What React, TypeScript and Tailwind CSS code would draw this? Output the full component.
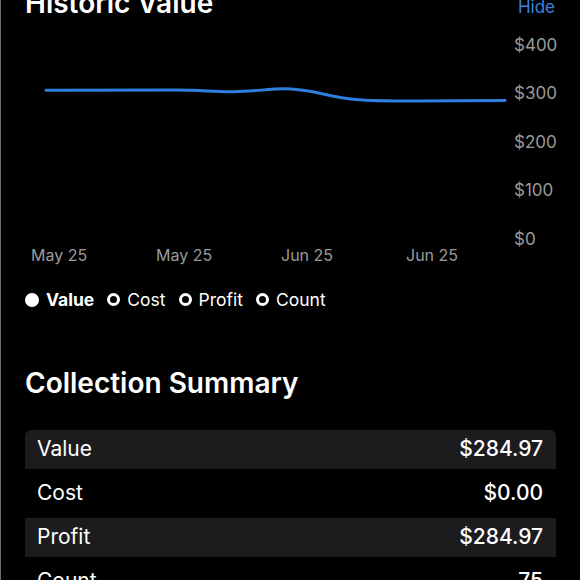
const yLabels = ["$400", "$300", "$200", "$100", "$0"];
const xLabels = ["May 25", "May 25", "Jun 25", "Jun 25"];

const legend = [
  { label: "Value", active: true },
  { label: "Cost", active: false },
  { label: "Profit", active: false },
  { label: "Count", active: false },
];

const rows = [
  { label: "Value", value: "$284.97", shaded: true },
  { label: "Cost", value: "$0.00", shaded: false },
  { label: "Profit", value: "$284.97", shaded: true },
  { label: "Count", value: "75", shaded: false },
];

function Chart() {
  return (
    <div className="flex h-[210px]">
      <svg width="489" height="210" viewBox="0 0 489 210" className="shrink-0">
        <path
          d="M21 53.3 L150 53 C175 53, 190 55, 208 54.8 C230 54.5, 245 51.5, 262 51.8 C285 52, 305 60, 330 62.5 C345 63.8, 360 64, 390 64 L480 63.5"
          fill="none"
          stroke="#2f7fe0"
          strokeWidth="3"
          strokeLinecap="round"
          strokeLinejoin="round"
        />
      </svg>
      <div className="flex flex-col justify-between text-[17px] leading-[16px] text-[#9a9a9a]">
        {yLabels.map((l) => (
          <span key={l}>{l}</span>
        ))}
      </div>
    </div>
  );
}

export default function App() {
  return (
    <div
      className="w-[580px] h-[580px] overflow-hidden bg-black border-l border-[#6b6b6b] text-white"
      style={{ fontFamily: "Inter, 'Liberation Sans', sans-serif" }}
    >
      <div className="px-[24px]">
        <div className="flex items-baseline justify-between -mt-[14px]">
          <h2 className="text-[28px] leading-[34px] font-semibold">Historic Value</h2>
          <button className="text-[17px] text-[#3a82e0] mr-[1px]">Hide</button>
        </div>

        <div className="mt-[16px]">
          <Chart />
        </div>

        <div className="ml-[6px] grid grid-cols-4 w-[500px] text-[16px] leading-[16px] text-[#9a9a9a]">
          {xLabels.map((l, i) => (
            <span key={i}>{l}</span>
          ))}
        </div>

        <div className="mt-[27px] flex items-center gap-[13px] text-[17.5px] leading-[20px]">
          {legend.map((item) => (
            <div key={item.label} className="flex items-center gap-[7px]">
              <span
                className={
                  item.active
                    ? "w-[14px] h-[14px] rounded-full bg-white"
                    : "w-[13px] h-[13px] rounded-full border-[3px] border-white"
                }
              />
              <span className={item.active ? "font-bold" : ""}>{item.label}</span>
            </div>
          ))}
        </div>

        <h2 className="mt-[56px] text-[28px] leading-[34px] font-semibold">Collection Summary</h2>

        <div className="mt-[30px] flex flex-col gap-[5px]">
          {rows.map((r, i) => (
            <div
              key={r.label}
              className={`flex items-center justify-between h-[39px] pl-[12px] pr-[13px] text-[21px] ${
                r.shaded ? "bg-[#1c1c1e]" : ""
              } ${i === 0 ? "rounded-t-md" : ""}`}
            >
              <span>{r.label}</span>
              <span className="font-medium">{r.value}</span>
            </div>
          ))}
        </div>
      </div>
    </div>
  );
}
